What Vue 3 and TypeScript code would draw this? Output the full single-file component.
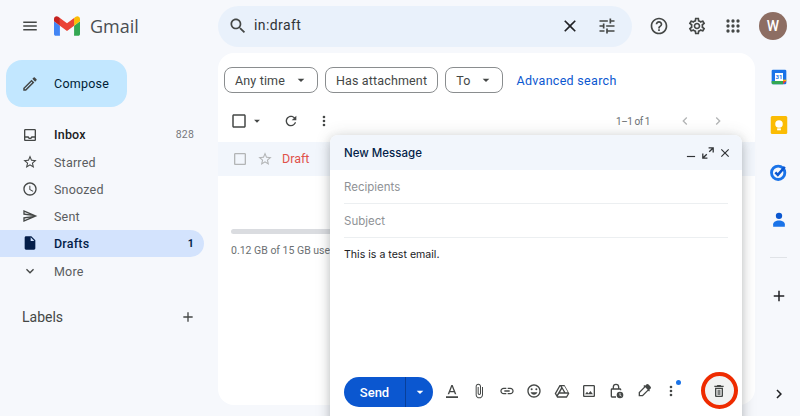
<script setup lang="ts">
const icons: Record<string, string> = {
  menu: 'M3 18h18v-2H3v2zm0-5h18v-2H3v2zm0-7v2h18V6H3z',
  search: 'M15.5 14h-.79l-.28-.27C15.41 12.59 16 11.11 16 9.5 16 5.91 13.09 3 9.5 3S3 5.91 3 9.5 5.91 16 9.5 16c1.61 0 3.09-.59 4.23-1.57l.27.28v.79l5 4.99L20.49 19l-4.99-5zm-6 0C7.01 14 5 11.99 5 9.5S7.01 5 9.5 5 14 7.01 14 9.5 11.99 14 9.5 14z',
  close: 'M19 6.41L17.59 5 12 10.59 6.41 5 5 6.41 10.59 12 5 17.59 6.41 19 12 13.41 17.59 19 19 17.59 13.41 12z',
  tune: 'M3 17v2h6v-2H3zM3 5v2h10V5H3zm10 16v-2h8v-2h-8v-2h-2v6h2zM7 9v2H3v2h4v2h2V9H7zm14 4v-2H11v2h10zm-6-4h2V7h4V5h-4V3h-2v6z',
  help: 'M11 18h2v-2h-2v2zm1-16C6.48 2 2 6.48 2 12s4.48 10 10 10 10-4.48 10-10S17.52 2 12 2zm0 18c-4.41 0-8-3.59-8-8s3.59-8 8-8 8 3.59 8 8-3.59 8-8 8zm0-14c-2.21 0-4 1.79-4 4h2c0-1.1.9-2 2-2s2 .9 2 2c0 2-3 1.75-3 5h2c0-2.25 3-2.5 3-5 0-2.21-1.79-4-4-4z',
  gear: 'M19.43 12.98c.04-.32.07-.64.07-.98 0-.34-.03-.66-.07-.98l2.11-1.65c.19-.15.24-.42.12-.64l-2-3.46c-.09-.16-.26-.25-.44-.25-.06 0-.12.01-.17.03l-2.49 1c-.52-.4-1.08-.73-1.69-.98l-.38-2.65C14.46 2.18 14.25 2 14 2h-4c-.25 0-.46.18-.49.42l-.38 2.65c-.61.25-1.17.59-1.69.98l-2.49-1c-.06-.02-.12-.03-.18-.03-.17 0-.34.09-.43.25l-2 3.46c-.13.22-.07.49.12.64l2.11 1.65c-.04.32-.07.65-.07.98 0 .33.03.66.07.98l-2.11 1.65c-.19.15-.24.42-.12.64l2 3.46c.09.16.26.25.44.25.06 0 .12-.01.17-.03l2.49-1c.52.4 1.08.73 1.69.98l.38 2.65c.03.24.24.42.49.42h4c.25 0 .46-.18.49-.42l.38-2.65c.61-.25 1.17-.59 1.69-.98l2.49 1c.06.02.12.03.18.03.17 0 .34-.09.43-.25l2-3.46c.12-.22.07-.49-.12-.64l-2.11-1.65zm-1.98-1.71c.04.31.05.52.05.73 0 .21-.02.43-.05.73l-.14 1.13.89.7 1.08.84-.7 1.21-1.27-.51-1.04-.42-.9.68c-.43.32-.84.56-1.25.73l-1.06.43-.16 1.13-.2 1.35h-1.4l-.19-1.35-.16-1.13-1.06-.43c-.43-.18-.83-.41-1.23-.71l-.91-.7-1.06.43-1.27.51-.7-1.21 1.08-.84.89-.7-.14-1.13c-.03-.31-.05-.54-.05-.74s.02-.43.05-.73l.14-1.13-.89-.7-1.08-.84.7-1.21 1.27.51 1.04.42.9-.68c.43-.32.84-.56 1.25-.73l1.06-.43.16-1.13.2-1.35h1.39l.19 1.35.16 1.13 1.06.43c.43.18.83.41 1.23.71l.91.7 1.06-.43 1.27-.51.7 1.21-1.07.85-.89.7.14 1.13zM12 8c-2.21 0-4 1.79-4 4s1.79 4 4 4 4-1.79 4-4-1.79-4-4-4zm0 6c-1.1 0-2-.9-2-2s.9-2 2-2 2 .9 2 2-.9 2-2 2z',
  apps: 'M6 4a2 2 0 100 4 2 2 0 000-4zm6 0a2 2 0 100 4 2 2 0 000-4zm6 0a2 2 0 100 4 2 2 0 000-4zM6 10a2 2 0 100 4 2 2 0 000-4zm6 0a2 2 0 100 4 2 2 0 000-4zm6 0a2 2 0 100 4 2 2 0 000-4zM6 16a2 2 0 100 4 2 2 0 000-4zm6 0a2 2 0 100 4 2 2 0 000-4zm6 0a2 2 0 100 4 2 2 0 000-4z',
  edit: 'M3 17.25V21h3.75L17.81 9.94l-3.75-3.75L3 17.25zM5.92 19H5v-.92l9.06-9.06.92.92L5.92 19zM20.71 5.63l-2.34-2.34c-.2-.2-.45-.29-.71-.29s-.51.1-.7.29l-1.83 1.83 3.75 3.75 1.83-1.83c.39-.39.39-1.02 0-1.41z',
  inbox: 'M19 3H5c-1.1 0-2 .9-2 2v14c0 1.1.9 2 2 2h14c1.1 0 2-.9 2-2V5c0-1.1-.9-2-2-2zm0 16H5v-3h3.56c.69 1.19 1.97 2 3.45 2s2.75-.81 3.45-2H19v3zm0-5h-4.99c0 1.1-.9 2-2 2s-2-.9-2-2H5V5h14v9z',
  star: 'M22 9.24l-7.19-.62L12 2 9.19 8.63 2 9.24l5.46 4.73L5.82 21 12 17.27 18.18 21l-1.63-7.03L22 9.24zM12 15.4l-3.76 2.27 1-4.28-3.32-2.88 4.38-.38L12 6.1l1.71 4.04 4.38.38-3.32 2.88 1 4.28L12 15.4z',
  clock: 'M11.99 2C6.47 2 2 6.48 2 12s4.47 10 9.99 10C17.52 22 22 17.52 22 12S17.52 2 11.99 2zM12 20c-4.42 0-8-3.58-8-8s3.58-8 8-8 8 3.58 8 8-3.58 8-8 8zm.5-13H11v6l5.25 3.15.75-1.23-4.5-2.67z',
  send: 'M4.01 6.03l7.51 3.22-7.52-1 .01-2.22m7.5 8.72L4 17.97v-2.22l7.51-1M2.01 3L2 10l15 2-15 2 .01 7L23 12 2.01 3z',
  draft: 'M6 2c-1.1 0-1.99.9-1.99 2L4 20c0 1.1.89 2 1.99 2H18c1.1 0 2-.9 2-2V8l-6-6H6zm7 7V3.5L18.5 9H13z',
  down: 'M16.59 8.59L12 13.17 7.41 8.59 6 10l6 6 6-6z',
  add: 'M19 13h-6v6h-2v-6H5v-2h6V5h2v6h6v2z',
  refresh: 'M17.65 6.35C16.2 4.9 14.21 4 12 4c-4.42 0-7.99 3.58-7.99 8s3.57 8 7.99 8c3.73 0 6.84-2.55 7.73-6h-2.08c-.82 2.33-3.04 4-5.65 4-3.31 0-6-2.69-6-6s2.69-6 6-6c1.66 0 3.14.69 4.22 1.78L13 11h7V4l-2.35 2.35z',
  dots: 'M12 4a2 2 0 100 4 2 2 0 000-4zm0 6a2 2 0 100 4 2 2 0 000-4zm0 6a2 2 0 100 4 2 2 0 000-4z',
  left: 'M15.41 7.41L14 6l-6 6 6 6 1.41-1.41L10.83 12z',
  right: 'M10 6L8.59 7.41 13.17 12l-4.58 4.59L10 18l6-6z',
  caret: 'M7 10l5 5 5-5z',
  minimize: 'M5 17h14v2H5z',
  expand: 'M13 2h9v9h-2.2V5.8l-4.9 4.9-1.6-1.6 4.9-4.9H13zM11 22H2v-9h2.2v5.2l4.9-4.9 1.6 1.6-4.9 4.9H11z',
  box: 'M19 5v14H5V5h14m0-2H5c-1.1 0-2 .9-2 2v14c0 1.1.9 2 2 2h14c1.1 0 2-.9 2-2V5c0-1.1-.9-2-2-2z',
  fontA: 'M11 3L5.5 17h2.25l1.12-3h6.25l1.12 3h2.25L13 3h-2zm-1.38 9L12 5.67 14.38 12H9.62zM3 20h18v2.5H3z',
  clip: 'M16.5 6v11.5c0 2.21-1.79 4-4 4s-4-1.79-4-4V5c0-1.38 1.12-2.5 2.5-2.5s2.5 1.12 2.5 2.5v10.5c0 .55-.45 1-1 1s-1-.45-1-1V6H10v9.5c0 1.38 1.12 2.5 2.5 2.5s2.5-1.12 2.5-2.5V5c0-2.21-1.79-4-4-4S7 2.79 7 5v12.5c0 3.04 2.46 5.5 5.5 5.5s5.5-2.46 5.5-5.5V6h-1.5z',
  link: 'M3.9 12c0-1.71 1.39-3.1 3.1-3.1h4V7H7c-2.76 0-5 2.24-5 5s2.24 5 5 5h4v-1.9H7c-1.71 0-3.1-1.39-3.1-3.1zM8 13h8v-2H8v2zm9-6h-4v1.9h4c1.71 0 3.1 1.39 3.1 3.1s-1.39 3.1-3.1 3.1h-4V17h4c2.76 0 5-2.24 5-5s-2.24-5-5-5z',
  emoji: 'M11.99 2C6.47 2 2 6.48 2 12s4.47 10 9.99 10C17.52 22 22 17.52 22 12S17.52 2 11.99 2zM12 20c-4.42 0-8-3.58-8-8s3.58-8 8-8 8 3.58 8 8-3.58 8-8 8zm3.5-9a1.5 1.5 0 100-3 1.5 1.5 0 000 3zm-7 0a1.5 1.5 0 100-3 1.5 1.5 0 000 3zm3.5 6.5c2.33 0 4.31-1.46 5.11-3.5H6.89c.8 2.04 2.78 3.5 5.11 3.5z',
  drive: 'M8.3 3h7.4L23 15.6 19.3 22H4.7L1 15.6 8.3 3zm1.15 2L3.3 15.6l1.1 1.9L10.6 7 9.45 5zM12 8.9L9.2 14h5.6L12 8.9zM7.9 16l-2.3 4h12.8l2.3-4H7.9zM11.7 5l5.4 9h3.6l-5.15-9H11.7z',
  image: 'M19 5v14H5V5h14m0-2H5c-1.1 0-2 .9-2 2v14c0 1.1.9 2 2 2h14c1.1 0 2-.9 2-2V5c0-1.1-.9-2-2-2zm-4.86 8.86l-3 3.87L9 13.14 6 17h12l-3.86-5.14z',
  lock: 'M12 1a5 5 0 00-5 5v2H6a2 2 0 00-2 2v10a2 2 0 002 2h6v-2H6V10h12v1h2v-1a2 2 0 00-2-2h-1V6a5 5 0 00-5-5zm-3 5a3 3 0 016 0v2H9V6zm9 7a5 5 0 100 10 5 5 0 000-10zm-.6 2h1.2v3.2l2 1.2-.6 1-2.6-1.6V15z',
  pen: 'M18.85 2.3a2.4 2.4 0 00-3.4 0L13.6 4.15l-1.1-1.1-1.4 1.4 1.1 1.1L4 13.8V20h6.2l8.25-8.25 1.1 1.1 1.4-1.4-1.1-1.1 1.85-1.85a2.4 2.4 0 000-3.4l-2.85-2.8zM9.4 18H6v-3.4l8.05-8.05 3.4 3.4L9.4 18z',
  trash: 'M16 9v10H8V9h8m-1.5-6h-5l-1 1H5v2h14V4h-3.5l-1-1zM18 7H6v12c0 1.1.9 2 2 2h8c1.1 0 2-.9 2-2V7zM10 10h1.5v8H10zM12.5 10H14v8h-1.5z',
}

const navItems = [
  { label: 'Inbox', icon: 'inbox', count: '828', cls: 'bold' },
  { label: 'Starred', icon: 'star', count: '', cls: '' },
  { label: 'Snoozed', icon: 'clock', count: '', cls: '' },
  { label: 'Sent', icon: 'send', count: '', cls: '' },
  { label: 'Drafts', icon: 'draft', count: '1', cls: 'active' },
  { label: 'More', icon: 'down', count: '', cls: '' },
]

const leftTools = ['fontA', 'clip', 'link', 'emoji', 'drive', 'image', 'lock', 'pen']
</script>

<template>
  <div class="app">
    <header class="topbar">
      <div class="brand">
        <svg class="ic18 menu-ic" viewBox="0 0 24 24"><path :d="icons.menu" /></svg>
        <svg class="logo" viewBox="52 42 88 66">
          <path fill="#4285f4" d="M58 108h14V74L52 59v43c0 3.32 2.69 6 6 6" />
          <path fill="#34a853" d="M120 108h14c3.32 0 6-2.69 6-6V59l-20 15" />
          <path fill="#fbbc04" d="M120 48v26l20-15v-8c0-7.42-8.47-11.65-14.4-7.2" />
          <path fill="#ea4335" d="M72 74V48l24 18 24-18v26L96 92" />
          <path fill="#c5221f" d="M52 51v8l20 15V48l-5.6-4.2c-5.94-4.45-14.4-.22-14.4 7.2" />
        </svg>
        <span class="wordmark">Gmail</span>
      </div>
      <div class="search">
        <svg class="ic20 search-ic" viewBox="0 0 24 24"><path :d="icons.search" /></svg>
        <span class="query">in:draft</span>
        <svg class="ic20 clear-ic" viewBox="0 0 24 24"><path :d="icons.close" /></svg>
        <svg class="ic20 tune-ic" viewBox="0 0 24 24"><path :d="icons.tune" /></svg>
      </div>
      <div class="actions">
        <svg class="ic20 grey help-ic" viewBox="0 0 24 24"><path :d="icons.help" /></svg>
        <svg class="ic20 grey" viewBox="0 0 24 24"><path :d="icons.gear" /></svg>
        <svg class="ic20 grey" viewBox="0 0 24 24"><path :d="icons.apps" /></svg>
        <div class="avatar">W</div>
      </div>
    </header>

    <div class="content">
      <aside class="sidebar">
        <button class="compose">
          <svg class="ic18" viewBox="0 0 24 24"><path :d="icons.edit" /></svg>
          <span>Compose</span>
        </button>
        <nav class="nav">
          <div v-for="item in navItems" :key="item.label" class="nav-row" :class="item.cls">
            <svg class="ic16" viewBox="0 0 24 24"><path :d="icons[item.icon]" /></svg>
            <span class="nav-label">{{ item.label }}</span>
            <span class="nav-count">{{ item.count }}</span>
          </div>
        </nav>
        <div class="labels">
          <span>Labels</span>
          <svg class="ic16" viewBox="0 0 24 24"><path :d="icons.add" /></svg>
        </div>
      </aside>

      <main class="card">
        <div class="filters">
          <div class="chip">Any time<svg class="caret" viewBox="0 0 24 24"><path :d="icons.caret" /></svg></div>
          <div class="chip">Has attachment</div>
          <div class="chip">To<svg class="caret" viewBox="0 0 24 24"><path :d="icons.caret" /></svg></div>
          <span class="advanced">Advanced search</span>
        </div>
        <div class="toolbar">
          <svg class="ic18 box" viewBox="0 0 24 24"><path :d="icons.box" /></svg>
          <svg class="caret small" viewBox="0 0 24 24"><path :d="icons.caret" /></svg>
          <svg class="ic16 refresh" viewBox="0 0 24 24"><path :d="icons.refresh" /></svg>
          <svg class="ic16 more" viewBox="0 0 24 24"><path :d="icons.dots" /></svg>
          <span class="pager">1–1 of 1</span>
          <svg class="ic16 pale pager-prev" viewBox="0 0 24 24"><path :d="icons.left" /></svg>
          <svg class="ic16 pale pager-next" viewBox="0 0 24 24"><path :d="icons.right" /></svg>
        </div>
        <div class="mail-row">
          <svg class="ic16 pale box-row" viewBox="0 0 24 24"><path :d="icons.box" /></svg>
          <svg class="ic16 pale star-row" viewBox="0 0 24 24"><path :d="icons.star" /></svg>
          <span class="draft-label">Draft</span>
        </div>
        <div class="storage">
          <div class="storage-bar"></div>
          <div class="storage-text">0.12 GB of 15 GB used</div>
        </div>
      </main>

      <aside class="rail">
        <svg class="cal" viewBox="0 0 24 24">
          <rect x="1" y="1" width="22" height="22" rx="2" fill="#1a73e8" />
          <rect x="6" y="6" width="12" height="12" fill="#fff" />
          <path d="M1 18h17v5H3a2 2 0 01-2-2z" fill="#34a853" />
          <path d="M18 18h5l-5 5z" fill="#ea4335" />
          <path d="M18 16h5v2h-5z" fill="#fbbc04" />
          <text x="12" y="15.5" text-anchor="middle" class="cal-num">31</text>
        </svg>
        <svg class="keep" viewBox="0 0 24 24">
          <path d="M3 0h18a2 2 0 012 2v20a2 2 0 01-2 2H3a2 2 0 01-2-2V2a2 2 0 012-2z" fill="#fbbc04" />
          <circle cx="12" cy="10.5" r="5" fill="#fff" />
          <rect x="9.5" y="16.5" width="5" height="2.6" fill="#fff" />
        </svg>
        <svg class="tasks" viewBox="0 0 24 24">
          <circle cx="11" cy="13" r="8" fill="none" stroke="#1a73e8" stroke-width="3.4" />
          <path d="M7.6 12.5l3 3 8.4-9.6" fill="none" stroke="#0b57d0" stroke-width="3" />
        </svg>
        <svg class="people" viewBox="0 0 24 24">
          <circle cx="12" cy="7" r="3.8" fill="#0b57d0" />
          <path d="M12 12.5c4 0 7 2 7 4.6V20H5v-2.9c0-2.6 3-4.6 7-4.6z" fill="#1a73e8" />
        </svg>
        <div class="rail-line"></div>
        <svg class="ic18 dark rail-add" viewBox="0 0 24 24"><path :d="icons.add" /></svg>
        <svg class="ic18 dark rail-next" viewBox="0 0 24 24"><path :d="icons.right" /></svg>
      </aside>
    </div>

    <section class="composer">
      <div class="composer-head">
        <span>New Message</span>
        <div class="head-icons">
          <svg class="ic14" viewBox="0 0 24 24"><path :d="icons.minimize" /></svg>
          <svg class="ic14" viewBox="0 0 24 24"><path :d="icons.expand" /></svg>
          <svg class="ic14" viewBox="0 0 24 24"><path :d="icons.close" /></svg>
        </div>
      </div>
      <div class="field">Recipients</div>
      <div class="field">Subject</div>
      <div class="body-text">This is a test email.</div>
      <div class="composer-foot">
        <div class="send">
          <span class="send-main">Send</span>
          <span class="send-more"><svg class="caret white" viewBox="0 0 24 24"><path :d="icons.caret" /></svg></span>
        </div>
        <div class="tools">
          <svg v-for="t in leftTools" :key="t" class="ic16 tool" viewBox="0 0 24 24"><path :d="icons[t]" /></svg>
          <span class="more-wrap">
            <svg class="ic16 tool" viewBox="0 0 24 24"><path :d="icons.dots" /></svg>
            <i class="blue-dot"></i>
          </span>
        </div>
        <span class="trash-wrap">
          <svg class="ic16 tool" viewBox="0 0 24 24"><path :d="icons.trash" /></svg>
          <i class="red-ring"></i>
        </span>
      </div>
    </section>
  </div>
</template>

<style scoped>
.app {
  position: relative;
  width: 800px;
  height: 416px;
  overflow: hidden;
  background: #f6f8fc;
  font-family: Roboto, "Liberation Sans", sans-serif;
  color: #202124;
}
svg { display: block; flex: none; fill: #444746; }
.ic14 { width: 14px; height: 14px; }
.ic16 { width: 16px; height: 16px; }
.ic18 { width: 18px; height: 18px; }
.ic20 { width: 20px; height: 20px; }
.topbar { display: flex; align-items: center; height: 52px; margin-bottom: 1px; }
.brand { display: flex; align-items: center; width: 218px; padding-left: 21px; box-sizing: border-box; }
.logo { width: 26px; height: 20px; margin-left: 15px; }
.wordmark { margin-left: 10px; font-size: 18px; color: #4a4e52; font-family: "Open Sans", Roboto, sans-serif; }
.search {
  display: flex; align-items: center;
  width: 414px; height: 41px;
  border-radius: 21px; background: #e9f1fb;
}
.search-ic { margin-left: 10px; }
.query { margin-left: 6px; padding-bottom: 2px; font-size: 14px; letter-spacing: .4px; flex: 1; color: #303336; }
.clear-ic { margin-right: 17px; fill: #202124; }
.tune-ic { margin-right: 15px; }
.actions { display: flex; align-items: center; flex: 1; padding-left: 17px; gap: 16px; }
.help-ic { margin-right: 2px; }
.avatar {
  width: 28px; height: 28px; border-radius: 50%;
  background: #8d6e63; color: #fff;
  display: flex; align-items: center; justify-content: center;
  font-size: 14px; font-weight: 500;
}
.content { display: flex; height: 363px; }
.sidebar { width: 218px; flex: none; }
.compose {
  display: flex; align-items: center;
  width: 121px; height: 47px; margin: 7px 0 0 6px; padding: 0 0 0 15px;
  border: 0; border-radius: 16px; background: #c2e7ff;
  font: 400 12.5px Roboto, sans-serif; letter-spacing: .25px; color: #001d35;
}
.compose span { margin-left: 15px; }
.nav { margin-top: 14px; }
.nav-row {
  display: flex; align-items: center;
  width: 204px; height: 27.2px; padding: 0 10px 0 22px; box-sizing: border-box;
  border-radius: 0 14px 14px 0;
  font-size: 12.5px; color: #5a5d60; letter-spacing: .2px;
}
.nav-label { margin-left: 16px; flex: 1; padding-top: 1px; }
.nav-count { font-size: 10.5px; color: #6b6f72; }
.nav-row.bold { font-weight: 500; color: #202124; }
.nav-row.bold .nav-label { padding-top: 0; }
.nav-row.bold .nav-count { font-weight: 400; color: #77797c; }
.nav-row.active { background: #d3e3fd; font-weight: 500; color: #041e49; }
.nav-row.active svg { fill: #041e49; }
.nav-row.active .nav-count { color: #041e49; font-weight: 700; }
.labels {
  display: flex; align-items: center; justify-content: space-between;
  width: 196px; margin-top: 25px; padding-left: 22px; box-sizing: border-box;
  font-size: 14px; color: #444746;
}
.card {
  width: 537px; height: 352px; flex: none; position: relative;
  background: #fff; border-radius: 16px; overflow: hidden;
}
.filters { display: flex; align-items: center; gap: 7px; padding: 14px 0 0 6px; }
.chip {
  display: flex; align-items: center; gap: 8px;
  height: 26px; padding: 0 10px; border: 1px solid #8a8d8f; border-radius: 8px; box-sizing: border-box;
  font-size: 12.5px; letter-spacing: .15px; color: #444746;
}
.caret { width: 16px; height: 16px; margin-right: -2px; }
.advanced { margin-left: 6px; font-size: 12.5px; letter-spacing: .3px; color: #0b57d0; }
.toolbar { display: flex; align-items: center; height: 30px; margin: 13px 0 6px; padding-left: 12px; }
.box { width: 18px; height: 18px; }
.caret.small { width: 14px; height: 14px; margin: 0 0 0 2px; }
.refresh { margin-left: 19px; }
.more { margin-left: 17px; }
.pager { margin-left: 284px; font-size: 10px; letter-spacing: -.45px; color: #6b6f72; }
.pale { fill: #b3b5b6; }
.pager-prev { margin-left: 27px; }
.pager-next { margin-left: 17px; }
.mail-row { display: flex; align-items: center; height: 34px; background: #f2f6fc; padding-left: 14px; }
.star-row { margin-left: 9px; }
.draft-label { margin-left: 9px; padding-bottom: 1px; font-size: 12.5px; color: #e0524a; }
.storage { padding: 53px 0 0 13px; }
.storage-bar { height: 5px; width: 130px; border-radius: 3px; background: #dadce0; }
.storage-text { margin-top: 10px; font-size: 10.5px; color: #6b6f72; }
.rail { width: 45px; flex: none; display: flex; flex-direction: column; align-items: center; padding-left: 2px; box-sizing: border-box; }
.cal { width: 16px; height: 16px; margin-top: 16px; }
.keep { width: 18px; height: 18px; margin-top: 31px; }
.tasks { width: 20px; height: 20px; margin-top: 28px; }
.people { width: 20px; height: 20px; margin-top: 28px; }
.cal-num { font: 700 9px Roboto, sans-serif; fill: #1a73e8; }
.rail-line { width: 17px; height: 1px; margin-top: 27px; background: #e0e3e7; }
.dark { fill: #202124; }
.rail-add { margin-top: 29px; }
.rail-next { margin-top: 80px; }
.composer {
  position: absolute; left: 330px; top: 135px; width: 412px; height: 300px;
  background: #fff; border-radius: 8px 8px 0 0;
  box-shadow: 0 4px 10px rgba(60, 64, 67, .25), 0 0 16px rgba(60, 64, 67, .15);
}
.composer-head {
  display: flex; align-items: center; justify-content: space-between;
  height: 35px; padding: 0 10px 0 14px; background: #f2f6fc; border-radius: 8px 8px 0 0;
  font: 500 11.5px Inter, Roboto, sans-serif; color: #041e49;
}
.head-icons { display: flex; gap: 3px; }
.head-icons svg { fill: #303336; }
.field {
  display: flex; align-items: center;
  height: 34px; margin: 0 14px; border-bottom: 1px solid #eceff1; box-sizing: border-box;
  font: 11.5px Inter, Roboto, sans-serif; color: #8f9296;
}
.body-text { margin: 10px 14px 0; font: 10.6px Inter, Roboto, sans-serif; color: #202124; }
.composer-foot { position: absolute; left: 14px; right: 14px; top: 242px; display: flex; align-items: center; }
.send {
  display: flex; width: 89px; height: 30px; border-radius: 15px; overflow: hidden;
  background: #0b57d0; color: #fff; font-size: 13px; font-weight: 500;
}
.send-main { width: 61px; display: flex; align-items: center; justify-content: center; border-right: 1px solid #083f9a; }
.send-more { flex: 1; display: flex; align-items: center; justify-content: center; }
.white { fill: #fff; margin: 0; }
.tools { display: flex; align-items: center; gap: 11.4px; margin: 0 0 2px 11px; }
.tool { fill: #444746; }
.more-wrap { position: relative; display: block; }
.blue-dot { position: absolute; right: -2px; top: -3px; width: 5px; height: 5px; border-radius: 50%; background: #1a73e8; }
.trash-wrap { position: relative; display: block; margin: 0 0 2px 32px; }
.red-ring {
  position: absolute; left: -10.5px; top: -11px; width: 37px; height: 37px; box-sizing: border-box;
  border: 4px solid #ee2b00; border-radius: 50%;
  background: rgba(60, 64, 67, .07);
}
</style>
